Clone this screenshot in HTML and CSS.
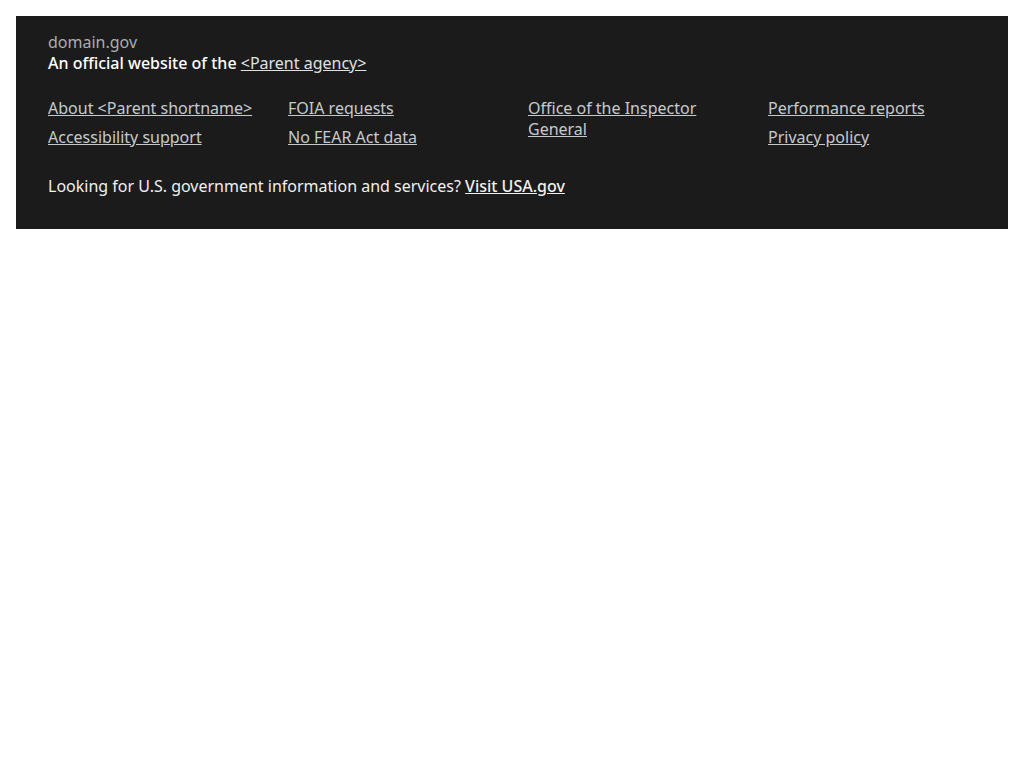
FILE: index.html
```html
<!DOCTYPE html>
<html lang="en">
<head>
<meta charset="utf-8">
<title>Identifier</title>
<link rel="stylesheet" href="styles.css">
</head>
<body>
<section class="identifier">
  <div class="masthead">
    <p class="domain">domain.gov</p>
    <p class="disclaimer">An official website of the <a href="#" class="parent">&lt;Parent agency&gt;</a></p>
  </div>
  <ul class="links">
    <li><a href="#">About &lt;Parent shortname&gt;</a></li>
    <li><a href="#">Accessibility support</a></li>
    <li><a href="#">FOIA requests</a></li>
    <li><a href="#">No FEAR Act data</a></li>
    <li><a href="#">Office of the Inspector General</a></li>
    <li><a href="#">Performance reports</a></li>
    <li><a href="#">Privacy policy</a></li>
  </ul>
  <p class="usagov">Looking for U.S. government information and services? <a href="#">Visit USA.gov</a></p>
</section>
</body>
</html>
```
FILE: styles.css
```css
body {
  margin: 16px;
  font-family: "Noto Sans", "Open Sans", sans-serif;
  font-size: 16px;
  line-height: 21px;
  background: #fff;
}
p { margin: 0; }
.identifier {
  background: #1b1b1b;
  padding: 16px 32px 32px 32px;
}
.domain { color: #a9aeb1; }
.disclaimer { color: #fff; font-weight: 500; }
.disclaimer a { color: #dfe1e2; font-weight: 400; }
.links {
  list-style: none;
  margin: 0;
  padding: 24px 0 20px;
  column-count: 4;
  column-gap: 32px;
}
.links li {
  padding-bottom: 8px;
  break-inside: avoid;
}
.links a { color: #c6cace; }
.usagov { color: #f0f0f0; }
.usagov a { color: #f0f0f0; font-weight: 500; }
```
